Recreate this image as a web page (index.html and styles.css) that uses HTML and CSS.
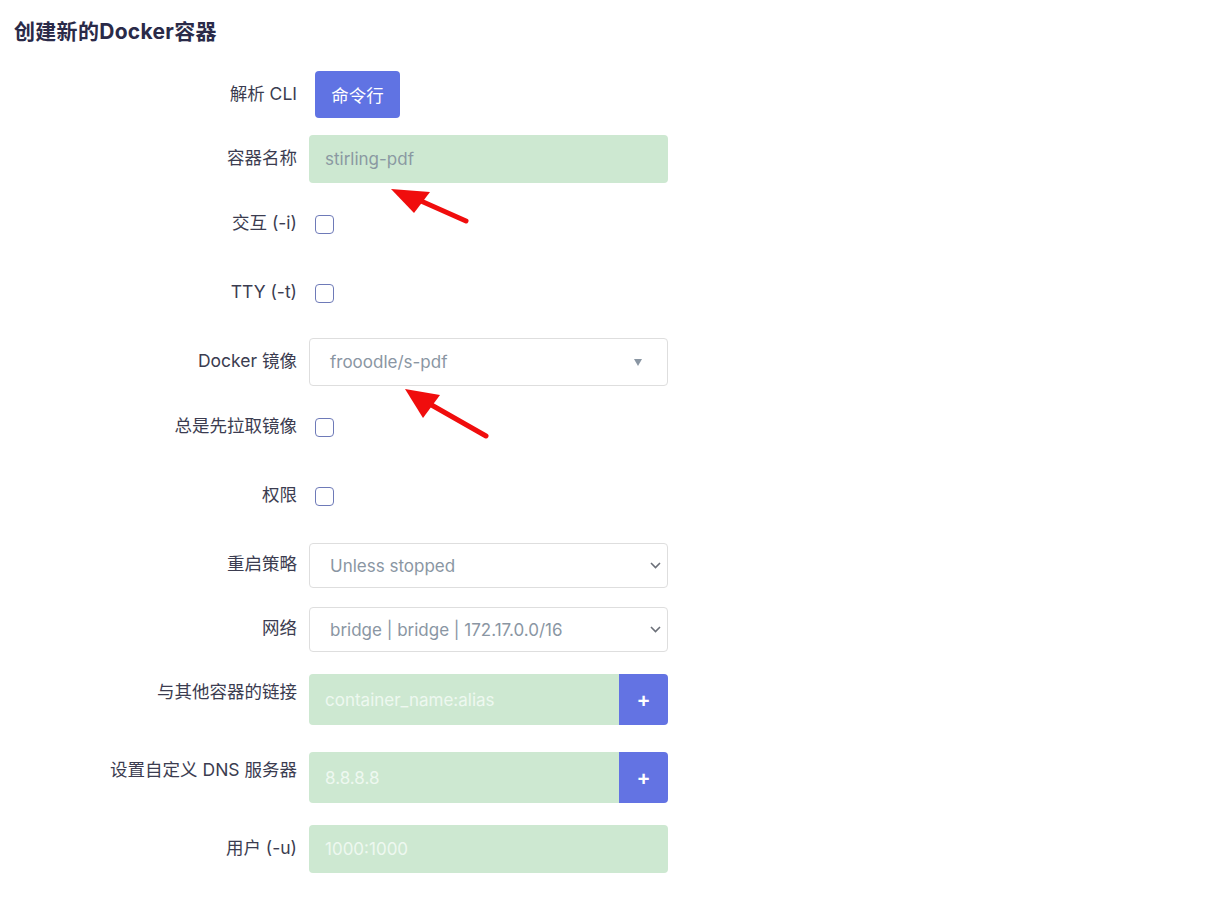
FILE: index.html
```html
<!DOCTYPE html>
<html>
  <head>
    <meta charset="utf-8">
    <title>创建新的Docker容器</title>
    <link rel="stylesheet" href="styles.css">
  </head>
  <body>
    <div class="page">
      <h1 class="title">创建新的Docker容器</h1>
      <form class="form">
        <div class="row">
          <label class="label">解析 CLI</label>
          <div class="field"><button type="button" class="btn">命令行</button></div>
        </div>
        <div class="row">
          <label class="label">容器名称</label>
          <div class="field"><input class="input" type="text" value="stirling-pdf"></div>
        </div>
        <div class="row">
          <label class="label">交互 (-i)</label>
          <div class="field field-check"><span class="check"></span></div>
        </div>
        <div class="row">
          <label class="label">TTY (-t)</label>
          <div class="field field-check"><span class="check"></span></div>
        </div>
        <div class="row">
          <label class="label">Docker 镜像</label>
          <div class="field">
            <div class="combo">
              <span>frooodle/s-pdf</span>
              <span class="caret"></span>
            </div>
          </div>
        </div>
        <div class="row">
          <label class="label">总是先拉取镜像</label>
          <div class="field field-check"><span class="check"></span></div>
        </div>
        <div class="row">
          <label class="label">权限</label>
          <div class="field field-check"><span class="check"></span></div>
        </div>
        <div class="row">
          <label class="label">重启策略</label>
          <div class="field field-select">
            <div class="select">
              <span>Unless stopped</span>
              <svg class="chevron" width="11" height="7" viewBox="0 0 11 7"><path d="M1 1l4.5 4.5L10 1" fill="none" stroke="#6b6f78" stroke-width="1.6"/></svg>
            </div>
          </div>
        </div>
        <div class="row">
          <label class="label">网络</label>
          <div class="field field-select">
            <div class="select">
              <span>bridge | bridge | 172.17.0.0/16</span>
              <svg class="chevron" width="11" height="7" viewBox="0 0 11 7"><path d="M1 1l4.5 4.5L10 1" fill="none" stroke="#6b6f78" stroke-width="1.6"/></svg>
            </div>
          </div>
        </div>
        <div class="row row-group">
          <label class="label">与其他容器的链接</label>
          <div class="field field-group">
            <div class="group">
              <input class="input input-left" type="text" placeholder="container_name:alias">
              <button type="button" class="add">+</button>
            </div>
          </div>
        </div>
        <div class="row row-group">
          <label class="label">设置自定义 DNS 服务器</label>
          <div class="field field-group">
            <div class="group">
              <input class="input input-left" type="text" placeholder="8.8.8.8">
              <button type="button" class="add">+</button>
            </div>
          </div>
        </div>
        <div class="row">
          <label class="label">用户 (-u)</label>
          <div class="field"><input class="input" type="text" placeholder="1000:1000"></div>
        </div>
      </form>

      <svg class="marks" width="1220" height="906" viewBox="0 0 1220 906">
        <line x1="466" y1="221" x2="412" y2="197" stroke="#f00d0d" stroke-width="5" stroke-linecap="round"/>
        <polygon points="391,189 430,192 414,213" fill="#f00d0d"/>
        <line x1="486" y1="436" x2="428" y2="403" stroke="#f00d0d" stroke-width="5" stroke-linecap="round"/>
        <polygon points="405,389 440,395 423,418" fill="#f00d0d"/>
      </svg>
    </div>
  </body>
</html>
```

FILE: styles.css
```css
body {
  margin: 0;
  background: #fff;
  font-family: Inter, "Noto Sans CJK SC", sans-serif;
  color: #3b3c50;
}

.page {
  position: relative;
  padding: 17px 0 0 14px;
  min-height: 889px;
}

.title {
  margin: 0 0 24px 0;
  font-size: 21px;
  line-height: 30px;
  font-weight: 700;
  color: #2a2a48;
  letter-spacing: 0.3px;
}

.row {
  display: flex;
  gap: 12px;
  margin-bottom: 17px;
}

.label {
  flex: none;
  width: 283px;
  text-align: right;
  font-size: 17.5px;
  line-height: 24px;
  padding-top: 11px;
}

.field {
  flex: none;
  width: 359px;
}

.btn {
  margin-left: 6px;
  width: 85px;
  height: 47px;
  border: none;
  border-radius: 4px;
  background: #6073e3;
  color: #fff;
  font-family: inherit;
  font-size: 17.5px;
}

.input {
  display: block;
  width: 100%;
  height: 48px;
  box-sizing: border-box;
  border: none;
  border-radius: 4px;
  background: #cde8d1;
  padding: 0 16px;
  font-family: inherit;
  font-size: 17px;
  color: #8a99a2;
  outline: none;
}

.input::placeholder {
  color: #eef8f0;
}

.field-check {
  height: 52px;
  box-sizing: border-box;
  padding: 15px 0 0 6px;
}

.check {
  display: block;
  width: 19px;
  height: 19px;
  box-sizing: border-box;
  border: 1.5px solid #6e7ab8;
  border-radius: 4px;
}

.combo {
  height: 48px;
  box-sizing: border-box;
  border: 1px solid #dedede;
  border-radius: 4px;
  display: flex;
  align-items: center;
  justify-content: space-between;
  padding: 0 25px 0 20px;
  font-size: 17px;
  color: #8a96a3;
}

.caret {
  width: 0;
  height: 0;
  border-left: 4px solid transparent;
  border-right: 4px solid transparent;
  border-top: 7px solid #8a96a3;
}

.field-select {
  padding-top: 2px;
}

.select {
  height: 45px;
  box-sizing: border-box;
  border: 1px solid #dedede;
  border-radius: 4px;
  display: flex;
  align-items: center;
  justify-content: space-between;
  padding: 0 6px 0 20px;
  font-size: 17px;
  color: #8a96a3;
}

.row-group {
  margin-bottom: 22px;
}

.field-group {
  padding-top: 5px;
}

.group {
  display: flex;
  height: 51px;
}

.input-left {
  flex: 1;
  height: 51px;
  border-radius: 4px 0 0 4px;
}

.add {
  flex: none;
  width: 49px;
  border: none;
  border-radius: 0 4px 4px 0;
  background: #6373e3;
  color: #fff;
  font-family: Inter, sans-serif;
  font-size: 21px;
  font-weight: 600;
  padding: 0;
}

.marks {
  position: absolute;
  top: 0;
  left: 0;
  pointer-events: none;
}
```
